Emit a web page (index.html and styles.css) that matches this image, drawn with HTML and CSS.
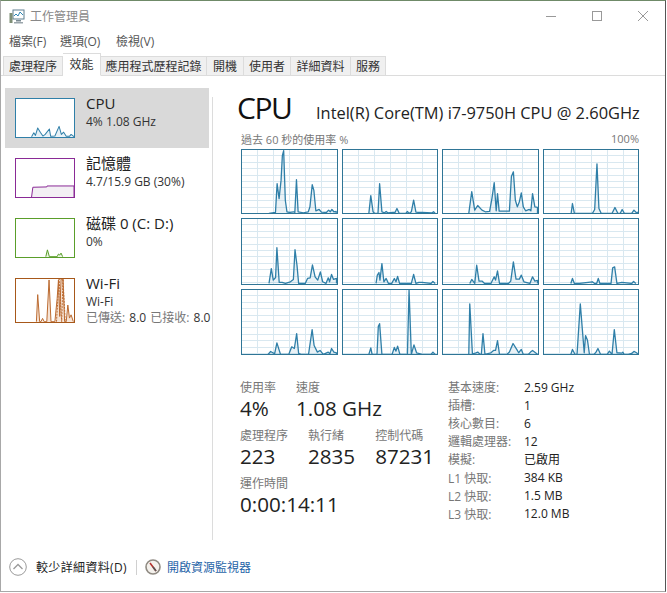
FILE: index.html
```html
<!DOCTYPE html>
<html lang="zh-Hant">
<head>
<meta charset="utf-8">
<title>工作管理員</title>
<link rel="stylesheet" href="styles.css">
</head>
<body>
<div class="window">
  <header class="titlebar">
    <svg class="app-icon" viewBox="0 0 16 15"><rect x="4" y="1" width="11" height="9" fill="#fff" stroke="#5f7f8f"/><path d="M5 7l2-2 2 2 2-4 3 3" fill="none" stroke="#2f87b5" stroke-width="1"/><rect x="7" y="11" width="5" height="1.5" fill="#7a8a92"/><rect x="5" y="13" width="9" height="1.5" fill="#9aa5ab"/><rect x="0.5" y="4" width="3" height="10" fill="#7f8f76"/></svg>
    <span class="app-name">工作管理員</span>
    <div class="win-controls">
      <svg viewBox="0 0 12 12"><path d="M1 6.5h10" stroke="#999" stroke-width="1"/></svg>
      <svg viewBox="0 0 12 12"><rect x="1.5" y="1.5" width="9" height="9" fill="none" stroke="#999"/></svg>
      <svg viewBox="0 0 12 12"><path d="M1 1l10 10M11 1L1 11" stroke="#999" stroke-width="1"/></svg>
    </div>
  </header>
  <nav class="menubar"><span>檔案(F)</span><span>選項(O)</span><span>檢視(V)</span></nav>
  <div class="tabs">
    <span class="tab t1">處理程序</span>
    <span class="tab t2 active">效能</span>
    <span class="tab t3">應用程式歷程記錄</span>
    <span class="tab t4">開機</span>
    <span class="tab t5">使用者</span>
    <span class="tab t6">詳細資料</span>
    <span class="tab t7">服務</span>
  </div>
  <main class="main">
    <aside class="sidebar">
      <div class="item selected">
        <svg class="thumb cpu" viewBox="45 295 179 118" preserveAspectRatio="none"><polyline points="93,412 100,400 105,408 112,385 120,398 128,410 135,405 148,388 152,411 165,410 178,380 185,405 192,398 200,411 210,411 215,405 222,410 224,412"/></svg>
        <div class="item-text"><div class="item-title">CPU</div><div class="item-sub">4% 1.08 GHz</div></div>
      </div>
      <div class="item">
        <svg class="thumb mem" viewBox="45 25 179 117" preserveAspectRatio="none"><polyline points="93,142 97,112 140,111 141,108 224,108 224,142"/></svg>
        <div class="item-text"><div class="item-title">記憶體</div><div class="item-sub">4.7/15.9 GB (30%)</div></div>
      </div>
      <div class="item">
        <svg class="thumb disk" viewBox="45 205 179 117" preserveAspectRatio="none"><polyline points="137,321 142,300 148,321 172,321 176,313 180,316 184,310 189,321"/></svg>
        <div class="item-text"><div class="item-title">磁碟 0 (C: D:)</div><div class="item-sub">0%</div></div>
      </div>
      <div class="item">
        <svg class="thumb wifi" viewBox="45 385 179 132" preserveAspectRatio="none"><polyline points="108,516 112,433 118,516 122,516 127,506 132,516 140,516 147,388 153,516 165,516 172,445 176,388 180,500 184,385 190,385 195,516 200,516 205,465 210,505 215,495 222,516"/><polyline class="dash" points="170,516 178,385 186,516 190,385 197,516"/></svg>
        <div class="item-text"><div class="item-title">Wi-Fi</div><div class="item-sub">Wi-Fi</div><div class="item-sub nowrap"><span class="muted">已傳送:</span> 8.0 <span class="muted">已接收:</span> 8.0</div></div>
      </div>
    </aside>
    <section class="panel">
      <div class="panel-head"><h1>CPU</h1><div class="cpu-model">Intel(R) Core(TM) i7-9750H CPU @ 2.60GHz</div></div>
      <div class="chart-label"><span>過去 60 秒的使用率 %</span><span>100%</span></div>
      <div class="charts">
        <div class="chart"><svg viewBox="33 178 288 192" preserveAspectRatio="none"><polyline points="115,370 135,367 140,280 146,325 152,270 156,195 160,180 165,330 170,365 178,367 190,365 194,367 199,268 204,365 220,368 235,365 240,350 247,283 252,300 258,362 268,358 275,366 290,367 297,360 302,365 307,358 313,365 320,364 320,370"/></svg></div>
        <div class="chart"><svg viewBox="333 178 289 192" preserveAspectRatio="none"><polyline points="412,370 418,316 425,365 430,370 440,370 445,280 452,365 460,368 465,364 470,368 485,367 492,367 498,355 505,370 525,370 530,364 535,370 542,365 549,330 556,366 565,367 575,367 605,368 610,365 615,370"/></svg></div>
        <div class="chart"><svg viewBox="7 178 286 192" preserveAspectRatio="none"><polyline points="85,370 94,304 103,360 112,346 125,360 135,365 148,364 155,325 162,277 168,362 172,310 177,363 208,363 214,258 220,244 226,330 232,350 238,335 244,308 250,350 257,362 268,358 273,362 278,310 285,350 293,352 293,370"/></svg></div>
        <div class="chart"><svg viewBox="307 178 289 192" preserveAspectRatio="none"><polyline points="390,370 394,340 400,370 455,370 462,358 469,220 475,355 482,370 515,370 524,352 533,370 540,370 546,358 553,370 575,370 582,360 590,368 596,366 596,370"/></svg></div>
        <div class="chart"><svg viewBox="33 10 287 195" preserveAspectRatio="none"><polyline points="115,205 122,160 128,195 135,187 139,97 146,202 155,202 165,205 180,200 189,193 194,103 200,150 205,205 225,205 232,190 240,188 247,149 255,185 263,195 271,170 278,200 288,205 295,188 299,200 305,178 311,193 320,190 320,205"/></svg></div>
        <div class="chart"><svg viewBox="333 10 289 195" preserveAspectRatio="none"><polyline points="434,205 438,180 443,172 446,195 452,145 458,200 465,190 472,205 482,205 490,190 495,200 500,184 506,205 542,205 549,178 556,205 565,202 575,202 602,205 608,199 615,205"/></svg></div>
        <div class="chart"><svg viewBox="7 10 286 195" preserveAspectRatio="none"><polyline points="88,205 94,193 103,205 109,150 116,198 125,198 133,205 152,205 162,185 166,195 172,167 178,205 205,205 212,198 220,140 228,192 238,192 244,180 252,200 270,205 278,185 285,198 293,196 293,205"/></svg></div>
        <div class="chart"><svg viewBox="307 10 289 195" preserveAspectRatio="none"><polyline points="389,205 394,190 400,205 415,205 455,200 462,205 468,205 473,190 478,205 512,205 517,158 523,155 530,205 545,202 575,205 581,199 588,205"/></svg></div>
        <div class="chart"><svg viewBox="33 220 287 195" preserveAspectRatio="none"><polyline points="112,415 120,406 132,413 139,380 150,415 175,415 184,392 192,397 199,352 205,412 212,415 235,415 246,340 252,388 262,408 270,403 280,415 295,408 300,413 305,397 312,408 320,410 320,415"/></svg></div>
        <div class="chart"><svg viewBox="333 220 289 195" preserveAspectRatio="none"><polyline points="412,415 418,395 422,415 437,415 441,330 445,322 452,415 483,415 490,394 495,405 500,390 507,415 530,415 535,220 542,415 550,386 558,410 575,415 602,415 608,408 615,415"/></svg></div>
        <div class="chart"><svg viewBox="7 220 286 195" preserveAspectRatio="none"><polyline points="85,415 88,262 96,413 105,411 112,408 120,415 123,415 128,352 134,415 152,410 160,403 166,403 172,373 178,415 200,415 208,408 219,382 232,403 236,410 244,400 250,415 265,415 272,408 278,403 290,412 293,415"/></svg></div>
        <div class="chart"><svg viewBox="307 220 289 195" preserveAspectRatio="none"><polyline points="389,415 394,400 402,415 408,415 418,262 430,410 434,358 440,372 446,415 460,415 466,408 472,397 480,415 500,415 507,405 515,415 522,340 530,410 545,411 548,408 552,415 565,415 575,412 582,406 590,410 596,415"/></svg></div>
      </div>
      <div class="stats">
        <div class="stats-left">
          <div class="stat-row">
            <div class="stat"><div class="stat-label">使用率</div><div class="stat-value">4%</div></div>
            <div class="stat"><div class="stat-label">速度</div><div class="stat-value">1.08 GHz</div></div>
          </div>
          <div class="stat-row">
            <div class="stat"><div class="stat-label">處理程序</div><div class="stat-value">223</div></div>
            <div class="stat"><div class="stat-label">執行緒</div><div class="stat-value">2835</div></div>
            <div class="stat"><div class="stat-label">控制代碼</div><div class="stat-value">87231</div></div>
          </div>
          <div class="stat-row">
            <div class="stat"><div class="stat-label">運作時間</div><div class="stat-value">0:00:14:11</div></div>
          </div>
        </div>
        <dl class="specs">
          <dt>基本速度:</dt><dd>2.59 GHz</dd>
          <dt>插槽:</dt><dd>1</dd>
          <dt>核心數目:</dt><dd>6</dd>
          <dt>邏輯處理器:</dt><dd>12</dd>
          <dt>模擬:</dt><dd>已啟用</dd>
          <dt>L1 快取:</dt><dd>384 KB</dd>
          <dt>L2 快取:</dt><dd>1.5 MB</dd>
          <dt>L3 快取:</dt><dd>12.0 MB</dd>
        </dl>
      </div>
    </section>
  </main>
  <footer class="footer">
    <svg class="fewer-icon" viewBox="0 0 18 18"><circle cx="9" cy="9" r="8.3" fill="#fff" stroke="#9a9a9a"/><path d="M4.5 11l4.500-4.500 4.500 4.500" fill="none" stroke="#9a9a9a" stroke-width="1.300"/></svg>
    <span class="fewer">較少詳細資料(D)</span>
    <span class="footer-sep"></span>
    <svg class="monitor-icon" viewBox="0 0 16 16"><circle cx="8" cy="8" r="7" fill="#f4f1ec" stroke="#8f8a82" stroke-width="1.600"/><path d="M5 4l6 8" stroke="#b3312c" stroke-width="1.600"/><path d="M8 8l3 4" stroke="#555" stroke-width="1.600"/></svg>
    <span class="monitor-link">開啟資源監視器</span>
  </footer>
</div>
</body>
</html>
```
FILE: styles.css
```css
* { box-sizing: border-box; }
html, body { margin: 0; padding: 0; background: #fff; }
body {
  width: 667px;
  height: 593px;
  overflow: hidden;
  font-family: "Open Sans", "Noto Sans CJK TC", sans-serif;
  font-size: 12px;
  color: #222;
}
.window {
  width: 666px;
  height: 592px;
  display: flex;
  flex-direction: column;
  border-top: 1px solid #6f8a68;
  border-left: 1px solid #a8a8a8;
  border-right: 1px solid #555;
  border-bottom: 1px solid #a8a8a8;
  background: #fff;
}
.titlebar { height: 30px; flex: none; display: flex; align-items: center; padding-left: 8px; }
.app-icon { width: 16px; height: 15px; }
.app-name { margin-left: 5px; color: #888; font-size: 12px; }
.win-controls { margin-left: auto; display: flex; gap: 34px; padding-right: 16px; }
.win-controls svg { width: 12px; height: 12px; }
.menubar { height: 20px; flex: none; display: flex; align-items: center; padding-left: 8px; color: #555; }
.menubar span:nth-child(1) { width: 51px; }
.menubar span:nth-child(2) { width: 56px; }
.tabs {
  height: 25px;
  flex: none;
  display: flex;
  align-items: flex-end;
  padding-left: 2px;
  border-bottom: 1px solid #dcdcdc;
}
.tab {
  height: 20px;
  margin-bottom: -1px;
  display: flex;
  align-items: center;
  justify-content: center;
  background: #f0f0f0;
  border: 1px solid #dcdcdc;
  border-left: 0;
  color: #333;
}
.t1 { width: 60px; border-left: 1px solid #dcdcdc; }
.t2 { width: 38px; }
.t3 { width: 106px; }
.t4 { width: 37px; }
.t5 { width: 47px; }
.t6 { width: 60px; }
.t7 { width: 35px; }
.tab.active {
  height: 23px;
  background: #fff;
  border-bottom-color: #fff;
  padding-bottom: 2px;
}
.main { flex: none; height: 464px; display: flex; }
.sidebar {
  width: 212px;
  flex: none;
  padding: 12px 0 0 4px;
  background: linear-gradient(#dcdcdc, #dcdcdc) right bottom / 1px 443px no-repeat;
}
.item { height: 60px; width: 204px; display: flex; gap: 11px; padding: 5px 0 0 10px; }
.item.selected { background: #d9d9d9; }
.thumb {
  width: 60px;
  height: 40px;
  margin-top: 5px;
  flex: none;
  background: #fff;
  border: 1px solid;
}
.thumb polyline { stroke-width: 1; vector-effect: non-scaling-stroke; stroke-linejoin: round; }
.thumb.cpu { border-color: #2f7fa8; }
.thumb.cpu polyline { stroke: #2f7fa8; fill: #e6f1f7; }
.thumb.mem { border-color: #8a2a96; }
.thumb.mem polyline { stroke: #8a2a96; fill: #f3eff4; }
.thumb.disk { border-color: #5a9e2a; }
.thumb.disk polyline { stroke: #5a9e2a; fill: #eaf4e2; }
.thumb.wifi { height: 45px; border-color: #a7581a; }
.thumb.wifi polyline { stroke: #bb6a30; fill: #f6e4d6; }
.thumb.wifi .dash { stroke-dasharray: 2 1; fill: none; }
.item-title { font-size: 15px; line-height: 20px; color: #222; }
.item-sub { font-size: 12px; line-height: 17px; color: #333; }
.nowrap { white-space: nowrap; line-height: 15px; word-spacing: 1px; }
.muted { color: #777; }
.panel { flex: 1; min-width: 0; padding: 0 26px 0 25px; }
.panel-head { height: 52px; display: flex; align-items: baseline; padding-top: 12px; }
h1 { margin: 0 0 0 -1px; font-size: 30px; line-height: 40px; font-weight: 400; color: #111; width: 79px; letter-spacing: -1.5px; flex: none; }
.cpu-model { font-size: 16.4px; color: #222; white-space: nowrap; }
.chart-label {
  height: 21px;
  margin-left: 3px;
  display: flex;
  justify-content: space-between;
  align-items: center;
  color: #777;
  font-size: 11px;
}
.charts {
  margin-left: 3px;
  width: 398px;
  height: 205px;
  display: grid;
  grid-template-columns: repeat(4, 1fr);
  grid-template-rows: repeat(3, 1fr);
  gap: 4px;
}
.chart {
  border: 1px solid #2f7596;
  background-color: #fff;
  background-image:
    repeating-linear-gradient(to right, transparent 0 15px, #d9e8f0 15px 16px),
    repeating-linear-gradient(to bottom, transparent 0 5.4px, #d9e8f0 5.4px 6.4px);
}
.chart svg { display: block; width: 100%; height: 100%; }
.chart polyline {
  stroke: #2f7fa8;
  stroke-width: 1.3;
  vector-effect: non-scaling-stroke;
  fill: rgba(47, 127, 168, 0.1);
  stroke-linejoin: round;
}
.stats { display: flex; margin-top: 25px; margin-left: 2px; }
.stats-left { width: 208px; flex: none; }
.stat-row { display: flex; gap: 20px; height: 48.2px; }
.stat-label { line-height: 18px; color: #777; white-space: nowrap; }
.stat-value { font-size: 20.6px; line-height: 22px; color: #222; white-space: nowrap; }
.specs {
  margin: -1px 0 0;
  display: grid;
  grid-template-columns: 76px auto;
  grid-auto-rows: 18.1px;
  align-items: center;
  align-content: start;
}
.specs dt { color: #777; }
.specs dd { margin: 0; color: #222; }
.footer { flex: 1; display: flex; align-items: center; padding: 3px 0 0 8px; }
.fewer-icon { width: 18px; height: 18px; }
.fewer { margin-left: 9px; color: #222; letter-spacing: 0.35px; }
.footer-sep { width: 1px; height: 15px; background: #d0d0d0; margin: 0 8px 0 9px; }
.monitor-icon { width: 16px; height: 16px; }
.monitor-link { margin-left: 6px; color: #1f64a8; }
```
